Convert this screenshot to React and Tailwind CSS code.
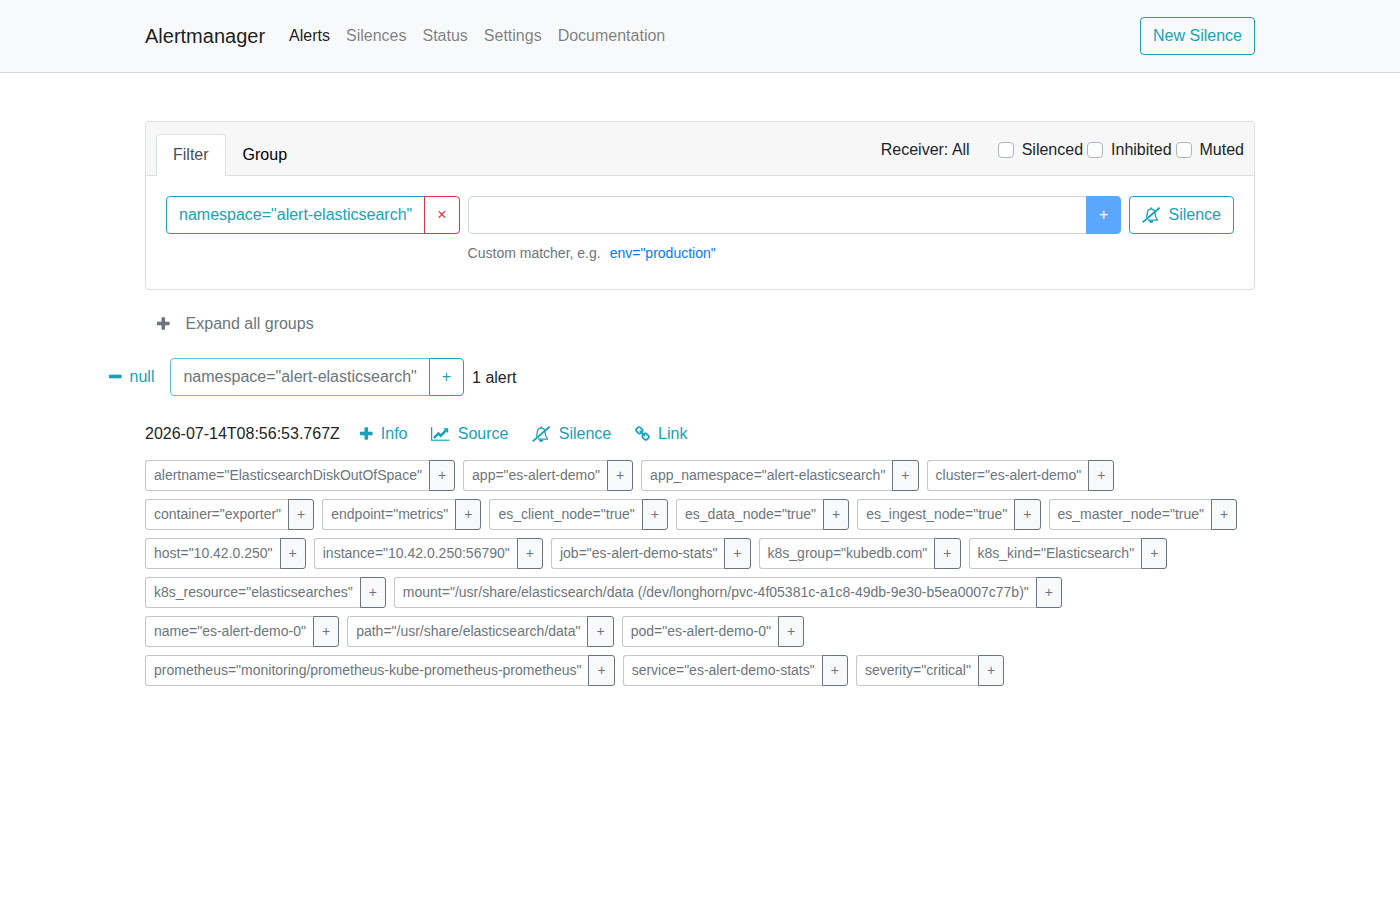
import React, { useState } from 'react';
import clsx from 'clsx';

const icons = {
  plus: {
    box: '192 0 1408 1792',
    className: 'w-[12.57px]',
    d: 'M1600 736v192q0 40-28 68t-68 28h-416v416q0 40-28 68t-68 28h-192q-40 0-68-28t-28-68v-416h-416q-40 0-68-28t-28-68v-192q0-40 28-68t68-28h416v-416q0-40 28-68t68-28h192q40 0 68 28t28 68v416h416q40 0 68 28t28 68z',
  },
  minus: {
    box: '192 0 1408 1792',
    className: 'w-[12.57px]',
    d: 'M1600 736v192q0 40-28 68t-68 28h-1216q-40 0-68-28t-28-68v-192q0-40 28-68t68-28h1216q40 0 68 28t28 68z',
  },
  link: {
    box: '64 0 1664 1792',
    className: 'w-[14.86px]',
    d: 'M1520 1216q0-40-28-68l-208-208q-28-28-68-28-42 0-72 32 3 3 19 18.5t21.5 21.5 15 19 13 25.5 3.5 27.5q0 40-28 68t-68 28q-15 0-27.5-3.5t-25.5-13-19-15-21.5-21.5-18.5-19q-33 31-33 73 0 40 28 68l206 207q27 27 68 27 40 0 68-26l147-146q28-28 28-67zm-703-705q0-40-28-68l-206-207q-28-28-68-28-39 0-68 27l-147 146q-28 28-28 67 0 40 28 68l208 208q27 27 68 27 42 0 72-31-3-3-19-18.5t-21.5-21.5-15-19-13-25.5-3.5-27.5q0-40 28-68t68-28q15 0 27.5 3.5t25.5 13 19 15 21.5 21.5 18.5 19q33-31 33-73zm895 705q0 120-85 203l-147 146q-83 83-203 83-121 0-204-85l-206-207q-83-83-83-203 0-123 88-209l-88-88q-86 88-208 88-120 0-204-84l-208-208q-84-84-84-204t85-203l147-146q83-83 203-83 121 0 204 85l206 207q83 83 83 203 0 123-88 209l88 88q86-88 208-88 120 0 204 84l208 208q84 84 84 204z',
  },
  chart: {
    box: '0 0 2048 1792',
    className: 'w-[18.29px]',
    d: 'M2048 1536v128h-2048v-1536h128v1408h1920zm-128-1248v435q0 21-19.5 29.5t-35.5-7.5l-121-121-633 633q-10 10-23 10t-23-10l-233-233-416 416-192-192 585-585q10-10 23-10t23 10l233 233 464-464-121-121q-16-16-7.5-35.5t29.5-19.5h435q14 0 23 9t9 23z',
  },
};

const navItems = ['Alerts', 'Silences', 'Status', 'Settings', 'Documentation'];

const labels = [
  'alertname="ElasticsearchDiskOutOfSpace"',
  'app="es-alert-demo"',
  'app_namespace="alert-elasticsearch"',
  'cluster="es-alert-demo"',
  'container="exporter"',
  'endpoint="metrics"',
  'es_client_node="true"',
  'es_data_node="true"',
  'es_ingest_node="true"',
  'es_master_node="true"',
  'host="10.42.0.250"',
  'instance="10.42.0.250:56790"',
  'job="es-alert-demo-stats"',
  'k8s_group="kubedb.com"',
  'k8s_kind="Elasticsearch"',
  'k8s_resource="elasticsearches"',
  'mount="/usr/share/elasticsearch/data (/dev/longhorn/pvc-4f05381c-a1c8-49db-9e30-b5ea0007c77b)"',
  'name="es-alert-demo-0"',
  'path="/usr/share/elasticsearch/data"',
  'pod="es-alert-demo-0"',
  'prometheus="monitoring/prometheus-kube-prometheus-prometheus"',
  'service="es-alert-demo-stats"',
  'severity="critical"',
];

function Icon({ name, className }) {
  const icon = icons[name];
  return (
    <svg
      viewBox={icon.box}
      fill="currentColor"
      stroke="currentColor"
      strokeWidth="16"
      className={clsx('inline-block h-4 shrink-0 overflow-visible align-[-2.75px]', icon.className, className)}
    >
      <path d={icon.d} />
    </svg>
  );
}

function BellSlash() {
  return (
    <svg
      viewBox="0 0 2048 1792"
      fill="none"
      stroke="currentColor"
      className="inline-block w-[18.29px] h-4 mr-2 overflow-visible align-[-2.6px]"
    >
      <path
        strokeWidth="145"
        strokeLinejoin="round"
        d="M640 1470H1750C1550 1260 1460 960 1444 620C1430 360 1260 230 1024 230C788 230 618 360 604 620C600 840 560 1010 480 1170"
      />
      <circle cx="1024" cy="130" r="95" fill="currentColor" stroke="none" />
      <path d="M780 1536h488a244 244 0 0 1-488 0z" fill="currentColor" stroke="none" />
      <path strokeWidth="210" d="M75 1725L1973 85" />
    </svg>
  );
}

function Navbar() {
  return (
    <header className="bg-[#f8f9fa] border-b border-[#d5d8db]">
      <nav className="flex items-center w-[1110px] h-[72px] mx-auto">
        <a href="#" className="mr-6 text-xl leading-[30px] text-black/90">Alertmanager</a>
        <ul className="flex gap-4">
          {navItems.map((item, i) => (
            <li key={item}>
              <a href="#" className={i === 0 ? 'text-black/90' : 'text-black/50'}>{item}</a>
            </li>
          ))}
        </ul>
        <button className="ml-auto h-[38px] px-3 rounded border border-[#17a2b8] text-[#17a2b8]">
          New Silence
        </button>
      </nav>
    </header>
  );
}

function Checkbox({ label }) {
  const [checked, setChecked] = useState(false);

  return (
    <label className="flex items-center gap-2">
      <input
        type="checkbox"
        checked={checked}
        onChange={(e) => setChecked(e.target.checked)}
        className="appearance-none size-4 rounded border border-[#adb5bd] bg-white checked:bg-[#007bff]"
      />
      {label}
    </label>
  );
}

function FilterCard() {
  const [matcher, setMatcher] = useState('');

  return (
    <section className="mt-12 h-[169px] rounded border border-[#dfdfdf]">
      <div className="flex items-start h-[54px] pt-3 px-2.5 bg-[#f7f7f7] border-b border-[#dfdfdf] rounded-t-[3px]">
        <button className="h-[42px] px-4 pb-px rounded-t border border-b-0 border-[#dee2e6] bg-white text-[#495057]">
          Filter
        </button>
        <button className="h-[42px] px-[17px] text-black">Group</button>
        <div className="flex gap-1 ml-auto mt-1">
          <span className="mr-6">Receiver: All</span>
          <Checkbox label="Silenced" />
          <Checkbox label="Inhibited" />
          <Checkbox label="Muted" />
        </div>
      </div>

      <div className="flex items-start gap-2 p-5">
        <div className="flex h-[38px]">
          <span className="px-3 py-[6px] rounded-l border border-[#17a2b8] text-[#17a2b8]">
            namespace="alert-elasticsearch"
          </span>
          <button className="-ml-px px-3 rounded-r border border-[#dc3545] text-[#dc3545]">×</button>
        </div>
        <div className="flex-1">
          <div className="flex h-[38px]">
            <input
              type="text"
              value={matcher}
              onChange={(e) => setMatcher(e.target.value)}
              className="flex-1 min-w-0 px-3 rounded-l border border-[#ced4da] bg-white focus:outline-none"
            />
            <button className="-ml-px px-3 rounded-r border border-[#59a7ff] bg-[#59a7ff] text-white">+</button>
          </div>
          <p className="mt-2 text-sm leading-[22px] text-[#6c757d]">
            Custom matcher, e.g.
            <button className="ml-[9px] text-[#007bff]">env="production"</button>
          </p>
        </div>
        <button className="h-[38px] px-3 rounded border border-[#17a2b8] text-[#17a2b8]">
          <BellSlash />
          Silence
        </button>
      </div>
    </section>
  );
}

function Action({ icon, children }) {
  return (
    <button className="text-[#17a2b8]">
      {icon === 'bellSlash' ? <BellSlash /> : <Icon name={icon} className="mr-2" />}
      {children}
    </button>
  );
}

function Label({ text }) {
  return (
    <div className="flex h-[31px] text-sm leading-[21px] text-[#6c757d]">
      <span className="px-2 py-1 rounded-l-[3px] border border-r-0 border-[#c4c8cb]">{text}</span>
      <button className="-ml-px px-2 rounded-r-[3px] border border-[#6c757d] bg-[#f8f9fa]">+</button>
    </div>
  );
}

export default function App() {
  return (
    <div className="min-h-screen bg-white font-['Liberation_Sans',Arial,sans-serif] text-base text-[#212529]">
      <Navbar />
      <main className="w-[1110px] mx-auto">
        <FilterCard />

        <button className="block mt-[22px] ml-3 text-[#6c757d]">
          <Icon name="plus" className="mr-4" />
          Expand all groups
        </button>

        <div className="flex items-center mt-[22px] -ml-9 h-[38px]">
          <button className="text-[#17a2b8]">
            <Icon name="minus" className="mr-2" />
            null
          </button>
          <div className="flex h-[38px] ml-4 mr-2">
            <span className="px-3 py-[6px] rounded-l border border-[#5bc0de] text-[#6c757d]">
              namespace="alert-elasticsearch"
            </span>
            <button className="-ml-px px-3 rounded-r border border-[#17a2b8] text-[#17a2b8]">+</button>
          </div>
          <span className="mt-px">1 alert</span>
        </div>

        <div className="flex items-center gap-6 mt-[26px]">
          <span className="-mr-[3.6px]">2026-07-14T08:56:53.767Z</span>
          <Action icon="plus">Info</Action>
          <Action icon="chart">Source</Action>
          <Action icon="bellSlash">Silence</Action>
          <Action icon="link">Link</Action>
        </div>

        <div className="flex flex-wrap gap-2 mt-[14px]">
          {labels.map((text) => (
            <Label key={text} text={text} />
          ))}
        </div>
      </main>
    </div>
  );
}
